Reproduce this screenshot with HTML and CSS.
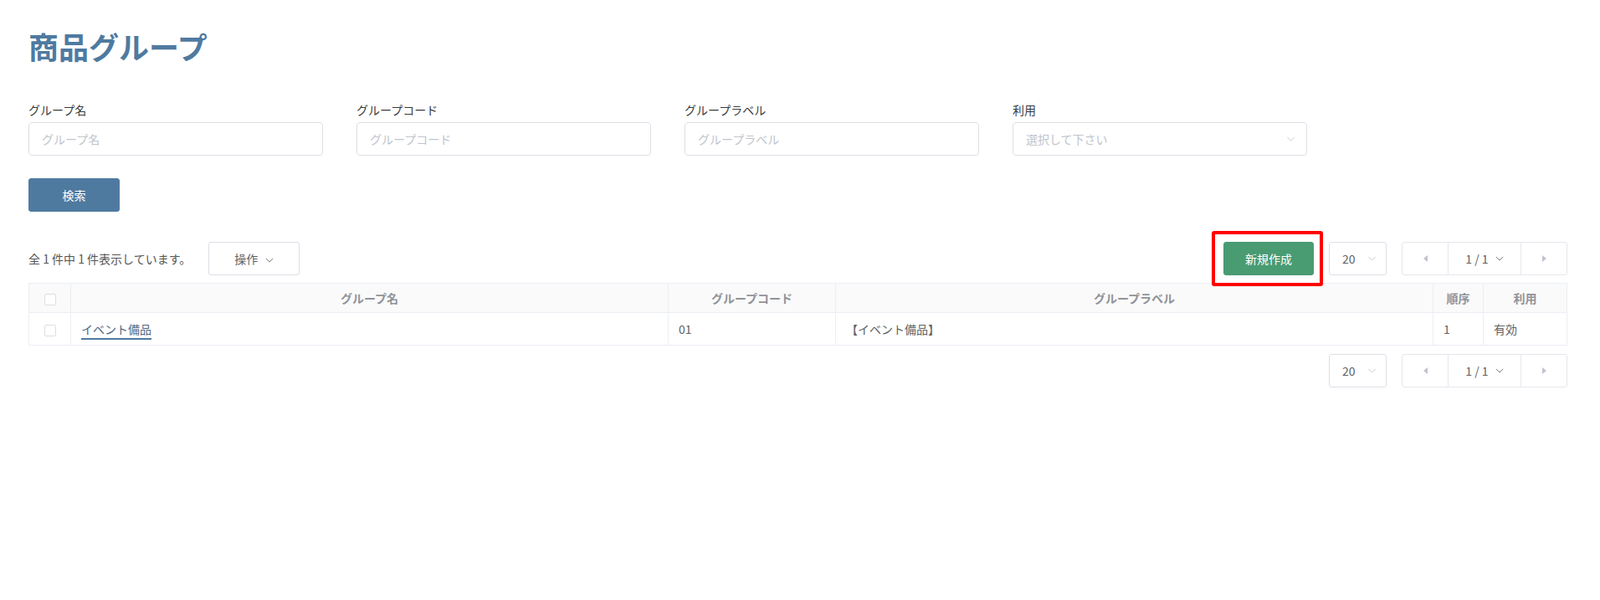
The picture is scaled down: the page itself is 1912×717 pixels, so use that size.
FILE: index.html
```html
<!DOCTYPE html>
<html>
<head>
  <title>商品グループ</title>
  <link rel="stylesheet" href="styles.css">
</head>
<body>
  <div class="page">
    <h1>商品グループ</h1>

    <div class="filters">
      <div class="field">
        <label for="groupName">グループ名</label>
        <input type="text" id="groupName" placeholder="グループ名">
      </div>
      <div class="field">
        <label for="groupCode">グループコード</label>
        <input type="text" id="groupCode" placeholder="グループコード">
      </div>
      <div class="field">
        <label for="groupLabel">グループラベル</label>
        <input type="text" id="groupLabel" placeholder="グループラベル">
      </div>
      <div class="field">
        <label>利用</label>
        <div class="select">
          <span class="placeholder">選択して下さい</span>
          <svg class="chevron" viewBox="0 0 12 7" width="11" height="6"><polyline points="1,1 6,6 11,1" fill="none" stroke="#c0c4cc" stroke-width="1"/></svg>
        </div>
      </div>
    </div>

    <button class="btn btn-primary search-btn">検索</button>

    <div class="toolbar">
      <div class="toolbar-left">
        <span class="count">全 1 件中 1 件表示しています。</span>
        <button class="btn btn-default ops-btn">操作
          <svg viewBox="0 0 12 7" width="10" height="6"><polyline points="1,1 6,6 11,1" fill="none" stroke="#606266" stroke-width="1"/></svg>
        </button>
      </div>
      <div class="toolbar-right">
        <span class="highlight"><button class="btn btn-success">新規作成</button></span>
        <div class="size-select">
          <span>20</span>
          <svg viewBox="0 0 12 7" width="11" height="6"><polyline points="1,1 6,6 11,1" fill="none" stroke="#c0c4cc" stroke-width="1"/></svg>
        </div>
        <div class="pager">
          <span class="pager-btn"><i class="tri tri-left"></i></span>
          <span class="pager-mid">1 / 1
            <svg viewBox="0 0 12 7" width="10" height="6"><polyline points="1,1 6,6 11,1" fill="none" stroke="#606266" stroke-width="1"/></svg>
          </span>
          <span class="pager-btn"><i class="tri tri-right"></i></span>
        </div>
      </div>
    </div>

    <table class="grid">
      <colgroup>
        <col style="width:50px">
        <col style="width:714px">
        <col style="width:200px">
        <col style="width:714px">
        <col style="width:60px">
        <col style="width:100px">
      </colgroup>
      <thead>
        <tr>
          <th><span class="checkbox"></span></th>
          <th>グループ名</th>
          <th>グループコード</th>
          <th>グループラベル</th>
          <th>順序</th>
          <th>利用</th>
        </tr>
      </thead>
      <tbody>
        <tr>
          <td class="check-cell"><span class="checkbox"></span></td>
          <td><a class="row-link" href="#">イベント備品</a></td>
          <td>01</td>
          <td>【イベント備品】</td>
          <td>1</td>
          <td>有効</td>
        </tr>
      </tbody>
    </table>

    <div class="bottom-pager">
      <div class="size-select">
        <span>20</span>
        <svg viewBox="0 0 12 7" width="11" height="6"><polyline points="1,1 6,6 11,1" fill="none" stroke="#c0c4cc" stroke-width="1"/></svg>
      </div>
      <div class="pager">
        <span class="pager-btn"><i class="tri tri-left"></i></span>
        <span class="pager-mid">1 / 1
          <svg viewBox="0 0 12 7" width="10" height="6"><polyline points="1,1 6,6 11,1" fill="none" stroke="#606266" stroke-width="1"/></svg>
        </span>
        <span class="pager-btn"><i class="tri tri-right"></i></span>
      </div>
    </div>
  </div>
</body>
</html>
```

FILE: styles.css
```css
body {
  margin: 0;
  font-family: "Noto Sans CJK JP", "Noto Sans", sans-serif;
  font-size: 14px;
  color: #606266;
  background: #fff;
}

.page {
  width: 1839px;
  padding: 37px 39px 40px 34px;
}

h1 {
  margin: 0;
  font-size: 36px;
  line-height: 36px;
  font-weight: bold;
  color: #4f7aa0;
}

.filters {
  display: grid;
  grid-template-columns: repeat(4, 352px);
  column-gap: 40px;
  margin-top: 48px;
}

.field label {
  display: block;
  line-height: 20px;
  margin-bottom: 5px;
  color: #3a3a3a;
}

.field input,
.select {
  box-sizing: border-box;
  width: 100%;
  height: 40px;
  padding: 0 15px;
  border: 1px solid #dcdfe6;
  border-radius: 4px;
  font-family: inherit;
  font-size: 14px;
  color: #606266;
  outline: none;
}

.field input::placeholder {
  color: #c0c4cc;
}

.select {
  display: flex;
  align-items: center;
  justify-content: space-between;
}

.select .placeholder {
  color: #c0c4cc;
}

.select .chevron {
  margin-right: -2px;
}

.btn {
  box-sizing: border-box;
  height: 40px;
  border-radius: 3px;
  font-family: inherit;
  font-size: 14px;
  cursor: pointer;
}

.btn-primary {
  background: #4f7aa0;
  border: 1px solid #4f7aa0;
  color: #fff;
}

.btn-success {
  width: 108px;
  background: #499b72;
  border: 1px solid #499b72;
  color: #fff;
}

.btn-default {
  background: #fff;
  border: 1px solid #dcdfe6;
  color: #606266;
}

.search-btn {
  display: block;
  width: 109px;
  margin-top: 27px;
}

.toolbar {
  display: flex;
  justify-content: space-between;
  align-items: center;
  margin-top: 36px;
}

.toolbar-left,
.toolbar-right {
  display: flex;
  align-items: center;
}

.count {
  color: #555;
}

.ops-btn {
  width: 109px;
  margin-left: 21px;
}

.ops-btn svg {
  margin-left: 6px;
  vertical-align: middle;
}

.toolbar-right {
  gap: 18px;
}

.highlight {
  position: relative;
  display: inline-block;
}

.highlight .btn {
  display: block;
}

.highlight::after {
  content: "";
  position: absolute;
  top: -13px;
  left: -14px;
  right: -11px;
  bottom: -13px;
  border: 4px solid #ff0000;
  border-radius: 3px;
  pointer-events: none;
}

.size-select {
  box-sizing: border-box;
  width: 69px;
  height: 40px;
  padding: 0 11px 0 15px;
  display: flex;
  align-items: center;
  justify-content: space-between;
  border: 1px solid #dcdfe6;
  border-radius: 3px;
  color: #606266;
}

.pager {
  display: flex;
  height: 40px;
  box-sizing: border-box;
  border: 1px solid #e4e7ed;
  border-radius: 3px;
}

.pager-btn {
  width: 54px;
  display: flex;
  align-items: center;
  justify-content: center;
}

.pager-mid {
  width: 86px;
  display: flex;
  align-items: center;
  justify-content: center;
  gap: 8px;
  border-left: 1px solid #e4e7ed;
  border-right: 1px solid #e4e7ed;
}

.tri {
  width: 0;
  height: 0;
  border-top: 4px solid transparent;
  border-bottom: 4px solid transparent;
}

.tri-left {
  border-right: 5px solid #c0c4cc;
}

.tri-right {
  border-left: 5px solid #c0c4cc;
}

.grid {
  width: 1839px;
  margin-top: 9px;
  border-collapse: collapse;
  table-layout: fixed;
}

.grid th,
.grid td {
  border: 1px solid #ebeef5;
  padding: 0 12px;
}

.grid th {
  height: 34px;
  background: #fafafa;
  color: #909399;
  font-weight: bold;
  text-align: center;
}

.grid td {
  height: 38px;
  text-align: left;
  color: #606266;
}

.grid td.check-cell {
  text-align: center;
}

.checkbox {
  display: inline-block;
  width: 12px;
  height: 12px;
  border: 1px solid #dcdfe6;
  border-radius: 2px;
  background: #fff;
  vertical-align: middle;
}

.row-link {
  color: #4f6784;
  text-decoration: none;
  border-bottom: 2px solid #4f7aa0;
  padding-bottom: 1px;
}

.bottom-pager {
  display: flex;
  justify-content: flex-end;
  gap: 18px;
  margin-top: 10px;
}
```
